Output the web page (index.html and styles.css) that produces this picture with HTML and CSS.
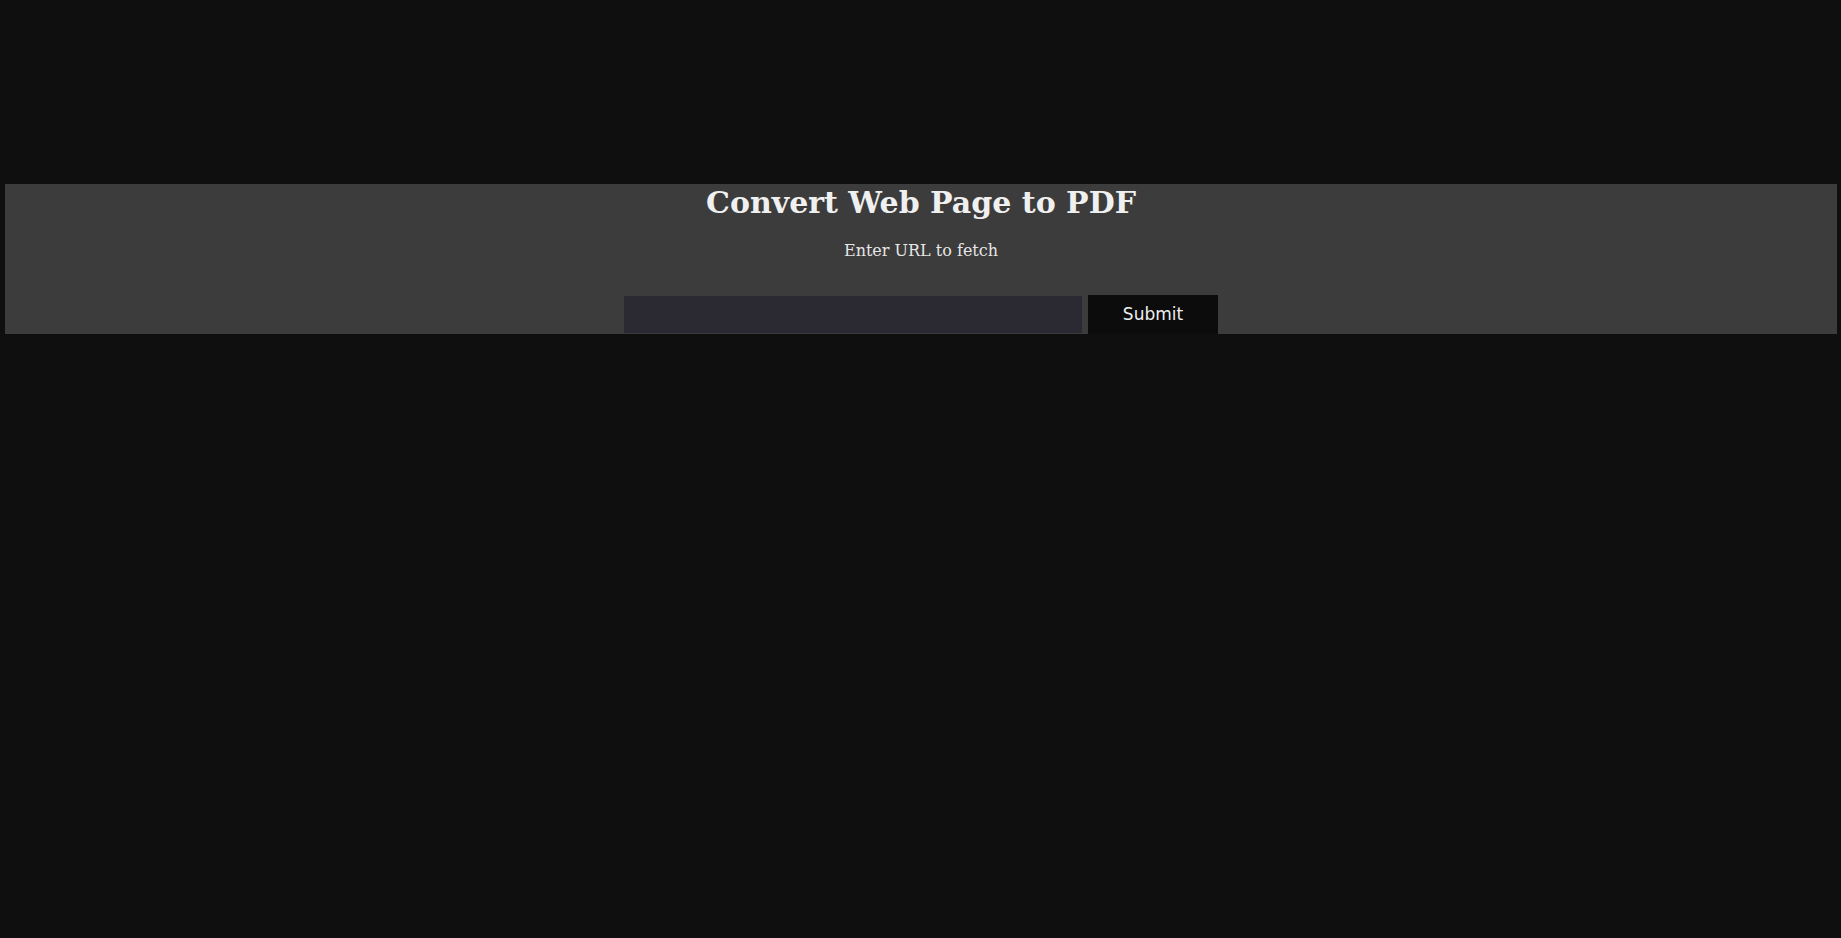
FILE: index.html
```html
<!DOCTYPE html>
<html lang="en">
<head>
<meta charset="utf-8">
<title>Convert Web Page to PDF</title>
<link rel="stylesheet" href="styles.css">
</head>
<body>
<main class="panel">
  <h1 class="title">Convert Web Page to PDF</h1>
  <p class="subtitle">Enter URL to fetch</p>
  <form class="fetch-form">
    <input class="url-input" type="text" name="url">
    <button class="submit-btn" type="submit">Submit</button>
  </form>
</main>
</body>
</html>
```
FILE: styles.css
```css
html, body {
  margin: 0;
  padding: 0;
  background: #0f0f0f;
  height: 100%;
}

body {
  padding: 184px 4px 0 5px;
  box-sizing: border-box;
  font-family: "DejaVu Serif", serif;
  color: #eeeeee;
}

.panel {
  height: 150px;
  background: #3c3c3c;
  text-align: center;
  overflow: hidden;
}

.title {
  margin: 0 0 20px;
  font-family: "DejaVu Serif", serif;
  font-weight: bold;
  font-size: 30px;
  line-height: 37px;
  color: #f0f0f0;
}

.subtitle {
  margin: 0;
  font-size: 16px;
  line-height: 19px;
  color: #e6e6e6;
}

.fetch-form {
  display: flex;
  justify-content: center;
  align-items: flex-start;
  gap: 6px;
  margin-top: 35px;
}

.url-input {
  width: 458px;
  height: 37px;
  margin: 1px 0 0;
  padding: 0 8px;
  box-sizing: border-box;
  background: #2b2a33;
  border: none;
  outline: none;
  color: #eeeeee;
}

.submit-btn {
  width: 130px;
  height: 42px;
  margin: 0;
  padding: 0 0 4px;
  box-sizing: border-box;
  background: #0c0c0c;
  border: none;
  color: #eeeeee;
  font-family: "DejaVu Sans", sans-serif;
  font-size: 17px;
}
```
